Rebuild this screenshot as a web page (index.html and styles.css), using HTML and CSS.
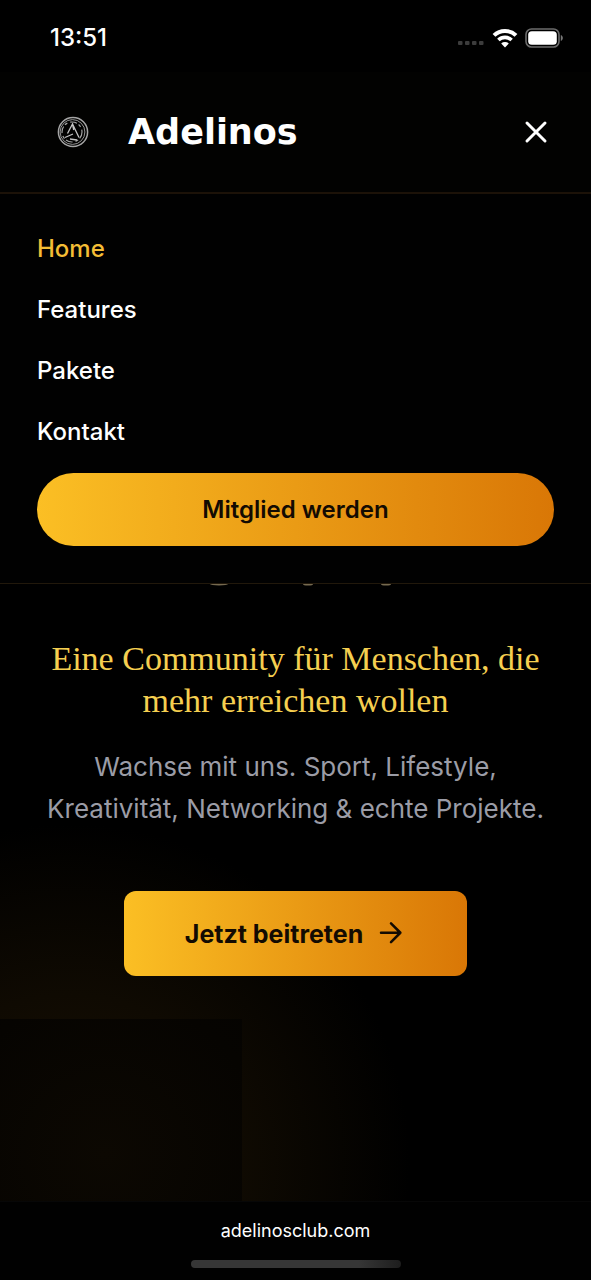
FILE: index.html
```html
<!doctype html>
<html lang="de">
  <head>
    <meta charset="UTF-8" />
    <meta name="viewport" content="width=device-width, initial-scale=1" />
    <title>Adelinos</title>
    <link rel="stylesheet" href="styles.css">
  </head>
  <body>
    <!-- status bar -->
    <div class="status-bar">
      <span class="status-time">13:51</span>
      <div class="status-icons">
        <svg width="27" height="16" viewBox="0 0 27 16" fill="#3c3c3c">
          <rect x="0" y="11" width="4.500" height="4" rx="1" />
          <rect x="7" y="11" width="4.500" height="4" rx="1" />
          <rect x="14" y="11" width="4.500" height="4" rx="1" />
          <rect x="21" y="11" width="4.500" height="4" rx="1" />
        </svg>
        <svg width="26" height="20" viewBox="0 0 26 20" fill="none" stroke="#fff" stroke-width="4">
          <path d="M2 7.4a15.8 15.8 0 0 1 22 0" />
          <path d="M6.4 12a9.5 9.5 0 0 1 13.2 0" stroke-width="3.6" />
          <path d="M13 19.5l-3.8-4a5.6 5.6 0 0 1 7.6 0z" fill="#fff" stroke="none" />
        </svg>
        <svg width="38" height="20" viewBox="0 0 38 20">
          <rect x="1" y="1" width="33" height="18" rx="5.5" fill="none" stroke="#6c6c6c" stroke-width="1.6" />
          <rect x="3.2" y="3.2" width="28.6" height="13.6" rx="3.6" fill="#fff" />
          <path d="M35.8 7v6c1.3-.6 2-1.700 2-3s-.7-2.400-2-3z" fill="#777" />
        </svg>
      </div>
    </div>

    <!-- header -->
    <header class="header">
      <a class="brand" href="#">
        <svg class="brand-logo" width="32" height="32" viewBox="0 0 32 32" fill="none" stroke="#a5a5a5">
          <circle cx="16" cy="16" r="14.600" stroke-width="1.500" />
          <circle cx="15.500" cy="16" r="12.400" stroke-width=".9" />
          <circle cx="15" cy="16" r="10" stroke-width="1.200" stroke-dasharray="7 2 3 3" />
          <path d="M10.500 17.500 15.500 8l6.500 13.500M15.500 8l1.200 6M8 21.500l8-3.500M13 23l7 1" stroke="#c4c4c4" stroke-width="1.300" />
        </svg>
        <span class="brand-name">Adelinos</span>
      </a>
      <button class="close" type="button" aria-label="Menü schließen">
        <svg width="36" height="36" viewBox="0 0 24 24" fill="none" stroke="#fff" stroke-width="2" stroke-linecap="round">
          <path d="M18 6 6 18M6 6l12 12" />
        </svg>
      </button>
    </header>

    <!-- mobile menu -->
    <nav class="menu">
      <div class="menu-links">
        <a class="menu-link active" href="#">Home</a>
        <a class="menu-link" href="#">Features</a>
        <a class="menu-link" href="#">Pakete</a>
        <a class="menu-link" href="#">Kontakt</a>
      </div>
      <button class="button menu-button" type="button">Mitglied werden</button>
    </nav>

    <!-- hero -->
    <main class="hero">
      <!-- title descenders below the menu edge -->
      <svg class="hero-edge" width="200" height="2" viewBox="0 0 200 2" fill="#75694f">
        <ellipse cx="23" cy="0" rx="9" ry="1.500" />
        <ellipse cx="112" cy="0" rx="5" ry="1.500" />
        <ellipse cx="190" cy="0" rx="5" ry="1.500" />
      </svg>
      <h2 class="hero-subtitle">Eine Community für Menschen, die mehr erreichen wollen</h2>
      <p class="hero-text">Wachse mit uns. Sport, Lifestyle, Kreativität, Networking &amp; echte Projekte.</p>
      <button class="button hero-button" type="button">
        Jetzt beitreten
        <svg width="30" height="30" viewBox="0 0 24 24" fill="none" stroke="#130b02" stroke-width="2" stroke-linecap="round" stroke-linejoin="round">
          <path d="M4 11h15.500M12 3.500l7.500 7.500-7.500 7.500" />
        </svg>
      </button>
      <div class="hero-shade"></div>
    </main>

    <!-- browser bar -->
    <footer class="address-bar">
      <span class="address">adelinosclub.com</span>
      <div class="home-indicator"></div>
    </footer>
  </body>
</html>
```
FILE: styles.css
```css
* {
  box-sizing: border-box;
}

body {
  margin: 0;
  min-height: 100vh;
  display: flex;
  flex-direction: column;
  background: #000;
  color: #fff;
  font-family: Inter, 'Liberation Sans', sans-serif;
}

a {
  color: inherit;
  text-decoration: none;
}

button {
  border: none;
  padding: 0;
  font-family: inherit;
  cursor: pointer;
}

/* status bar */
.status-bar {
  height: 72px;
  padding: 2px 28px 0 50px;
  display: flex;
  justify-content: space-between;
  align-items: flex-start;
}
.status-time {
  font-size: 24px;
  line-height: 72px;
  font-weight: 500;
}
.status-icons {
  display: flex;
  align-items: center;
  gap: 7px;
  height: 72px;
}

/* header */
.header {
  height: 122px;
  padding: 0 37px 0 57px;
  display: flex;
  justify-content: space-between;
  align-items: center;
  background: #020201;
  border-bottom: 2px solid #1c1208;
}
.brand {
  display: flex;
  align-items: center;
  gap: 39px;
}
.brand-name {
  font-family: 'DejaVu Sans', sans-serif;
  font-size: 35px;
  font-weight: 700;
}
.close {
  display: flex;
  background: none;
}

/* menu */
.menu {
  padding: 37px;
  border-bottom: 1px solid #21180b;
  background: #010101;
}
.menu-links {
  display: flex;
  flex-direction: column;
  gap: 25px;
}
.menu-link {
  font-size: 24px;
  line-height: 36px;
  font-weight: 500;
}
.menu-link.active {
  color: #f4bd35;
}

.button {
  background: linear-gradient(to right, #fbbf24, #d97706);
  color: #130b02;
  font-size: 24px;
}
.menu-button {
  width: 100%;
  height: 73px;
  margin-top: 23px;
  border-radius: 37px;
  font-weight: 600;
}

/* hero */
.hero {
  position: relative;
  flex: 1;
  padding: 0 37px;
  display: flex;
  flex-direction: column;
  align-items: center;
  text-align: center;
  background: radial-gradient(circle at 70px 580px, #1a1103 0, #0f0a02 170px, #000 340px);
}
.hero-subtitle {
  margin: 52px 0 0;
  font-family: 'Liberation Serif', serif;
  font-size: 34px;
  line-height: 42px;
  font-weight: 400;
  color: #f5cf50;
}
.hero-text {
  margin: 24px 0 0;
  font-size: 26px;
  line-height: 42px;
  color: #9b9ca6;
}
.hero-button {
  position: relative;
  z-index: 1;
  margin-top: 61px;
  height: 85px;
  padding: 0 61px;
  display: flex;
  align-items: center;
  gap: 13px;
  border-radius: 12px;
  font-size: 25px;
  font-weight: 700;
}
/* darker panel over the glow */
.hero-shade {
  position: absolute;
  left: 0;
  bottom: 0;
  width: 41%;
  height: 182px;
  background: radial-gradient(circle at 105px 135px, #0c0802 0, #060401 160px, #040301 240px);
}

/* address bar */
.address-bar {
  height: 79px;
  padding: 17px 0 12px;
  display: flex;
  flex-direction: column;
  align-items: center;
  justify-content: space-between;
  border-top: 1px solid #070707;
  background: #010101;
}
.address {
  font-size: 18px;
  line-height: 24px;
}
.home-indicator {
  width: 210px;
  height: 8px;
  border-radius: 4px;
  background: linear-gradient(to right, #363636 80%, #1d1d1d);
}
```
